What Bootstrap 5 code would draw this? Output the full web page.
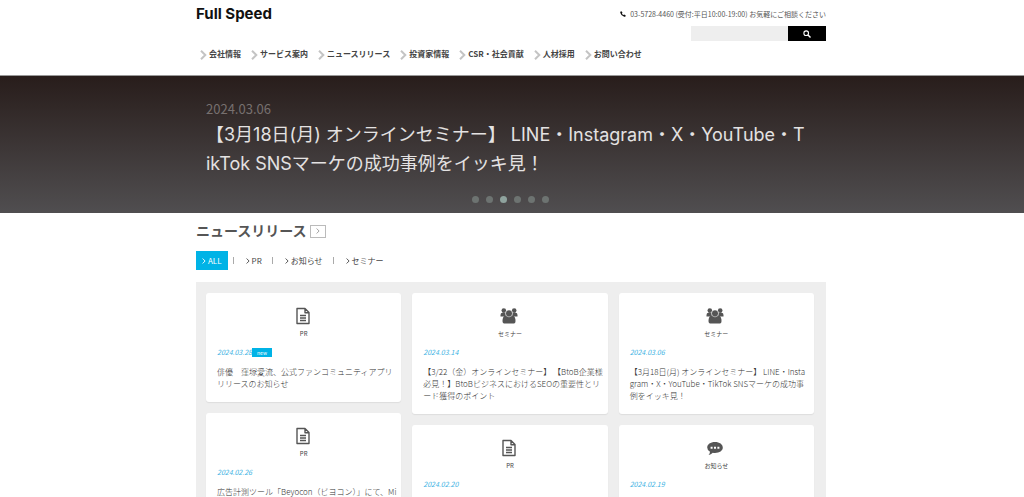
<!DOCTYPE html>
<html lang="ja">
<head>
<meta charset="utf-8">
<meta name="viewport" content="width=device-width, initial-scale=1">
<title>Full Speed</title>
<link rel="stylesheet" href="https://cdn.jsdelivr.net/npm/bootstrap@5.3.0/dist/css/bootstrap.min.css">
<style>
body { font-family: "Noto Sans CJK JP", sans-serif; font-size: 8px; line-height: 12px; color: #444; background: #fff; overflow-x: hidden; }
a, a:hover { color: inherit; text-decoration: none; }
.site-width { max-width: 632px; margin: 0 auto; padding-right: 2px; }
.site-header { border-bottom: 1px solid #999; }
.brand-name { font-family: Inter, sans-serif; font-weight: 700; font-size: 15px; line-height: 20px; color: #111; }
.header-top { padding-top: 4px; min-height: 42px; }
.tel-line { font-size: 7px; line-height: 12px; padding-top: 4px; color: #555; }
.search-form { width: 135px; height: 15px; margin-top: 6px; }
.search-form input { width: 97px; border: 0; background: #eee; font-size: 8px; padding: 0 4px; border-radius: 0; }
.search-form button { flex: 1; border: 0; background: #000; padding: 0; line-height: 0; }
.main-nav { gap: 10px; padding: 6px 0 15px 4px; font-weight: 700; }
.main-nav a { display: flex; align-items: center; gap: 2px; white-space: nowrap; line-height: 12px; }
.main-nav svg { width: 7px; height: 10px; margin-top: 2px; }
.hero { background: linear-gradient(#281d1b, #504e50); color: #e4e2e2; height: 137px; }
.hero-text { padding: 23px 10px 0; }
.hero-date { font-size: 13px; line-height: 20px; color: #77706f; }
.hero-title { font-family: Inter, "Noto Sans CJK JP", sans-serif; font-size: 18px; line-height: 29px; font-weight: 400; margin: 1px 0 0; white-space: nowrap; }
.hero-dots { gap: 7px; padding: 18px 2px 0 0; }
.hero-dots button { width: 7px; height: 7px; border: 0; border-radius: 50%; padding: 0; background: #6d7371; }
.hero-dots button.current { background: #8fa39e; }
.section-title { font-size: 14px; line-height: 20px; font-weight: 700; margin: 0; color: #555; }
.section-head { gap: 3px; padding-top: 7px; }
.more-link { width: 16px; height: 13px; border: 1px solid #bbb; margin-top: 2px; }
.filters { margin-top: 11px; height: 19px; }
.filters a { display: flex; align-items: center; gap: 2px; height: 19px; padding: 0 10px; }
.filters a.current { background: #00b3e6; color: #fff; padding: 0 6px; margin-right: 5px; }
.filters i { width: 1px; height: 7px; background: #aaa; margin: 0 2px 0 0; }
.filters svg { width: 4px; height: 6px; margin-top: 1px; }
.news-panel { background: #eee; margin-top: 12px; padding: 11px 12px 11px 10px; }
.news-grid { gap: 11px; }
.news-col { flex: 1 1 0; min-width: 0; display: flex; flex-direction: column; gap: 11px; }
.news-card { background: #fff; border-radius: 3px; box-shadow: 0 1px 1px #ddd; padding: 14px 5px 12px 11px; }
.news-icon { height: 18px; padding-right: 8px; text-align: center; line-height: 0; }
.news-icon svg { height: 18px; }
.news-kind { font-size: 6px; line-height: 10px; padding: 4px 6px 0 0; text-align: center; }
.news-date { font-size: 7px; line-height: 12px; margin-top: 7px; color: #3bb2e3; display: flex; align-items: center; gap: 0; }
.news-new { background: #00b3e6; color: #fff; font-size: 5px; line-height: 9px; width: 20px; text-align: center; }
.news-text { margin: 8px 0 0; white-space: nowrap; color: #333; font-weight: 300; }
</style>
</head>
<body>
<svg class="d-none" aria-hidden="true">
  <symbol id="chev" viewBox="0 0 4 6"><path d="M.6.5 3.1 3 .6 5.500" fill="none" stroke="currentColor" stroke-width=".9"/></symbol>
  <symbol id="navchev" viewBox="0 0 7 10"><path d="M1 .8 5.300 5 1 9.200" fill="none" stroke="#c4c4c4" stroke-width="2"/></symbol>
  <symbol id="doc" viewBox="0 0 14 18"><path d="M1 1.500h8l4 4v11H1zM9 1.500v4.200h4M4 8.500h6M4 11h6M4 13.500h6" fill="none" stroke="#555" stroke-width="1.400" stroke-linejoin="round"/></symbol>
  <symbol id="users" viewBox="0 0 18 18"><g fill="#555"><circle cx="3.800" cy="3.600" r="2.300"/><circle cx="14.200" cy="3.600" r="2.300"/><path d="M.5 9.500V8q0-2.300 2-2.300h2.800L6 9.500zM17.500 9.500V8q0-2.300-2-2.300h-2.800L12 9.500z"/><path d="M5 8.800Q2.500 9.500 2.500 14q0 2.600 2.500 2.600h8q2.500 0 2.500-2.600 0-4.500-2.500-5.200z"/><circle cx="9" cy="6.400" r="3.500" stroke="#fff" stroke-width=".5"/></g></symbol>
  <symbol id="talk" viewBox="0 0 16 18"><path d="M8 3c4.500 0 7.800 2.400 7.800 5.600S12.500 14 8 14q-1.200 0-2.200-.2Q4 15.700 1.600 16q1.300-1.500 1.400-3.200Q.2 11.200.2 8.600C.2 5.400 3.500 3 8 3z" fill="#555"/><path d="M3.600 7.700h2v2h-2zM7 7.700h2v2H7zM10.400 7.700h2v2h-2z" fill="#fff"/></symbol>
</svg>
<header class="site-header">
  <div class="site-width">
    <div class="header-top d-flex justify-content-between">
      <a class="brand-name" href="#">Full Speed</a>
      <div class="d-flex flex-column align-items-end">
        <div class="tel-line d-flex align-items-center gap-1">
          <svg width="6" height="6" viewBox="0 0 12 12"><path d="M3 .5 5 3.500 3.800 5Q5 7.200 7 8.200L8.500 7l3 2-.6 2q-1 .8-2.500.5Q1.500 9 .5 3.500.3 1.500 1.200.8z" fill="#111"/></svg>
          <span>03-5728-4460 (受付:平日10:00-19:00) お気軽にご相談ください</span>
        </div>
        <form class="search-form d-flex">
          <input type="text" aria-label="検索">
          <button type="button" aria-label="検索する"><svg width="8" height="8" viewBox="0 0 8 8"><circle cx="3.200" cy="3.200" r="2.300" fill="none" stroke="#fff" stroke-width="1.100"/><path d="m5 5 2.500 2.500" stroke="#fff" stroke-width="1.400"/></svg></button>
        </form>
      </div>
    </div>
    <nav class="main-nav d-flex">
      <a href="#"><svg><use href="#navchev"/></svg>会社情報</a>
      <a href="#"><svg><use href="#navchev"/></svg>サービス案内</a>
      <a href="#"><svg><use href="#navchev"/></svg>ニュースリリース</a>
      <a href="#"><svg><use href="#navchev"/></svg>投資家情報</a>
      <a href="#"><svg><use href="#navchev"/></svg>CSR・社会貢献</a>
      <a href="#"><svg><use href="#navchev"/></svg>人材採用</a>
      <a href="#"><svg><use href="#navchev"/></svg>お問い合わせ</a>
    </nav>
  </div>
</header>
<section class="hero">
  <div class="site-width">
    <div class="hero-text">
      <div class="hero-date">2024.03.06</div>
      <h1 class="hero-title">【3月18日(月) オンラインセミナー】 LINE・Instagram・X・YouTube・T<br>ikTok SNSマーケの成功事例をイッキ見！</h1>
    </div>
    <div class="hero-dots d-flex justify-content-center">
      <button type="button" aria-label="1"></button><button type="button" aria-label="2"></button><button type="button" class="current" aria-label="3"></button><button type="button" aria-label="4"></button><button type="button" aria-label="5"></button><button type="button" aria-label="6"></button>
    </div>
  </div>
</section>
<main class="site-width">
  <div class="section-head d-flex align-items-center">
    <h2 class="section-title">ニュースリリース</h2>
    <a class="more-link d-flex align-items-center justify-content-center" href="#" aria-label="一覧"><svg width="4" height="6" color="#999"><use href="#chev"/></svg></a>
  </div>
  <nav class="filters d-flex align-items-center">
    <a class="current" href="#"><svg><use href="#chev"/></svg>ALL</a><i></i>
    <a href="#"><svg><use href="#chev"/></svg>PR</a><i></i>
    <a href="#"><svg><use href="#chev"/></svg>お知らせ</a><i></i>
    <a href="#"><svg><use href="#chev"/></svg>セミナー</a>
  </nav>
  <div class="news-panel">
    <div class="news-grid d-flex">
      <div class="news-col">
        <article class="news-card">
          <div class="news-icon"><svg width="14"><use href="#doc"/></svg></div>
          <div class="news-kind">PR</div>
          <div class="news-date"><em>2024.03.28</em><span class="news-new">new</span></div>
          <p class="news-text"><a href="#">俳優　窪塚愛流、公式ファンコミュニティアプリ<br>リリースのお知らせ</a></p>
        </article>
        <article class="news-card">
          <div class="news-icon"><svg width="14"><use href="#doc"/></svg></div>
          <div class="news-kind">PR</div>
          <div class="news-date"><em>2024.02.26</em></div>
          <p class="news-text"><a href="#">広告計測ツール「Beyocon（ビヨコン）」にて、Mi</a></p>
        </article>
      </div>
      <div class="news-col">
        <article class="news-card">
          <div class="news-icon"><svg width="18"><use href="#users"/></svg></div>
          <div class="news-kind">セミナー</div>
          <div class="news-date"><em>2024.03.14</em></div>
          <p class="news-text"><a href="#">【3/22（金）オンラインセミナー】 【BtoB企業様<br>必見！】BtoBビジネスにおけるSEOの重要性とリ<br>ード獲得のポイント</a></p>
        </article>
        <article class="news-card flex-grow-1">
          <div class="news-icon"><svg width="14"><use href="#doc"/></svg></div>
          <div class="news-kind">PR</div>
          <div class="news-date"><em>2024.02.20</em></div>
        </article>
      </div>
      <div class="news-col">
        <article class="news-card">
          <div class="news-icon"><svg width="18"><use href="#users"/></svg></div>
          <div class="news-kind">セミナー</div>
          <div class="news-date"><em>2024.03.06</em></div>
          <p class="news-text"><a href="#">【3月18日(月) オンラインセミナー】 LINE・Insta<br>gram・X・YouTube・TikTok SNSマーケの成功事<br>例をイッキ見！</a></p>
        </article>
        <article class="news-card flex-grow-1">
          <div class="news-icon"><svg width="16"><use href="#talk"/></svg></div>
          <div class="news-kind">お知らせ</div>
          <div class="news-date"><em>2024.02.19</em></div>
        </article>
      </div>
    </div>
  </div>
</main>
<script src="https://cdn.jsdelivr.net/npm/bootstrap@5.3.0/dist/js/bootstrap.bundle.min.js"></script>
</body>
</html>
